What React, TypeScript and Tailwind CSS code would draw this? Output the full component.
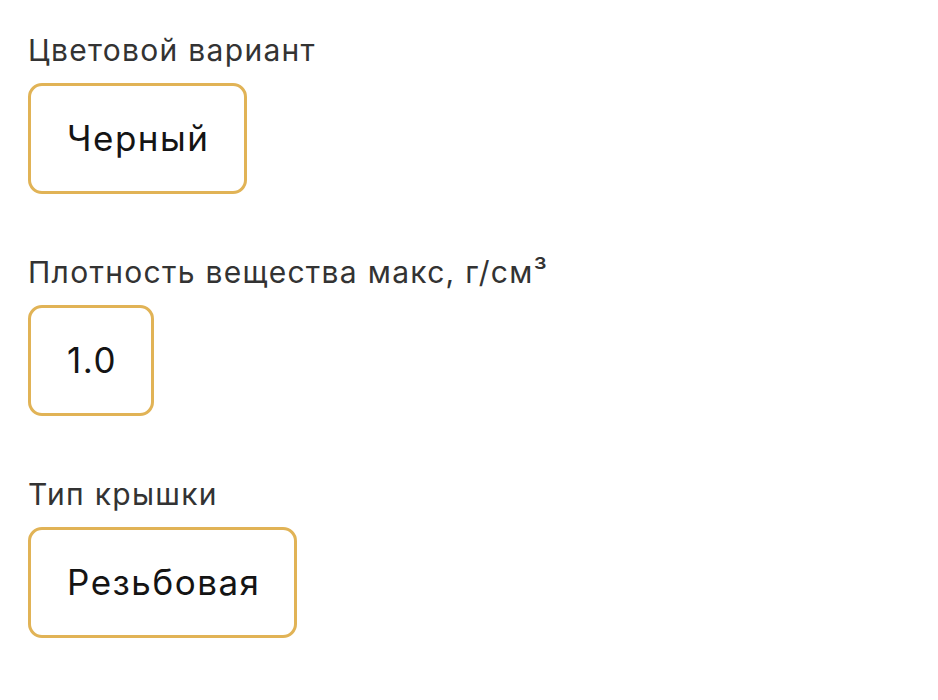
const fields = [
  { label: 'Цветовой вариант', value: 'Черный' },
  { label: 'Плотность вещества макс, г/см³', value: '1.0' },
  { label: 'Тип крышки', value: 'Резьбовая' },
];

export default function App() {
  return (
    <div className="min-h-screen bg-white pt-8 pl-[28px]" style={{ fontFamily: 'Inter, "Noto Sans", sans-serif' }}>
      {fields.map((f) => (
        <div key={f.label} className="mb-[60px]">
          <p className="text-[30px] leading-[36px] tracking-[1.3px] text-[#333333]">{f.label}</p>
          <div className="mt-[15px] inline-flex h-[111px] items-center rounded-[14px] border-[3px] border-[#E1B356] bg-white pl-[36px] pr-[34px]">
            <span className="text-[35px] tracking-[1.5px] text-[#141414]">{f.value}</span>
          </div>
        </div>
      ))}
    </div>
  );
}
